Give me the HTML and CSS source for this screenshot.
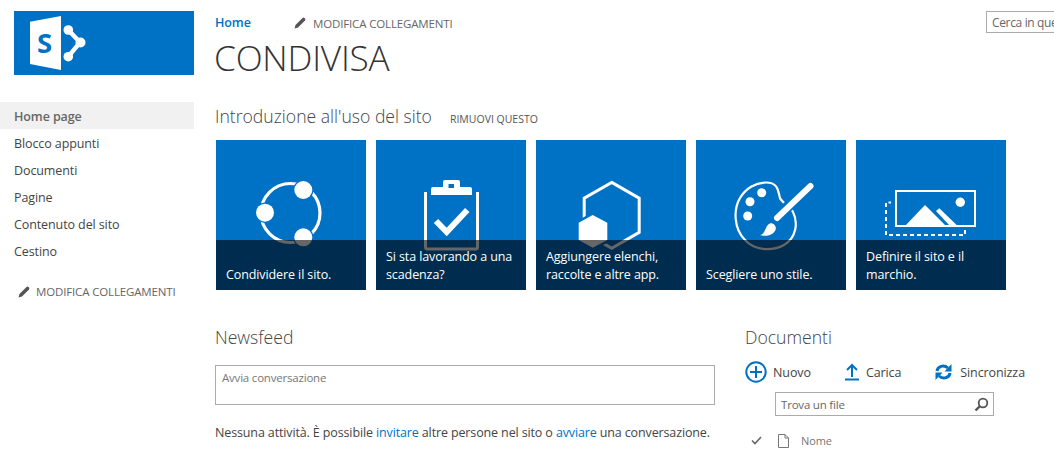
FILE: index.html
```html
<!DOCTYPE html>
<html lang="it">
<head>
<meta charset="utf-8">
<title>Condivisa</title>
<link rel="stylesheet" href="styles.css">
</head>
<body>
<div class="page">
  <aside class="side">
    <div class="logo">
      <svg width="180" height="64" viewBox="0 0 180 64">
        <polygon points="16,10.7 47,5 47,59 16,53" fill="#fff"/>
        <text x="30.500" y="42" class="logo-s">S</text>
        <path d="M54.300 19 L66 31.300 L54.300 45.700" fill="none" stroke="#fff" stroke-width="4.500"/>
        <circle cx="54.300" cy="19" r="4.800" fill="#fff"/>
        <circle cx="66.500" cy="31.500" r="5" fill="#fff"/>
        <circle cx="54.300" cy="45.700" r="4.800" fill="#fff"/>
      </svg>
    </div>
    <nav class="nav">
      <a class="nav-item is-active">Home page</a>
      <a class="nav-item">Blocco appunti</a>
      <a class="nav-item">Documenti</a>
      <a class="nav-item">Pagine</a>
      <a class="nav-item">Contenuto del sito</a>
      <a class="nav-item">Cestino</a>
    </nav>
    <div class="edit edit-side">
      <svg class="pencil" width="12" height="12" viewBox="0 0 12 12"><path d="M0.500 11.500 L1.500 8 L8.500 1 Q9.500 0.200 10.500 1 L11 1.500 Q11.800 2.500 11 3.500 L4 10.500 Z" fill="#555"/></svg>
      <span>MODIFICA COLLEGAMENTI</span>
    </div>
  </aside>
  <main class="main">
    <header class="top">
      <div class="top-left">
        <div class="crumbs">
          <a class="home">Home</a>
          <div class="edit">
            <svg class="pencil" width="12" height="12" viewBox="0 0 12 12"><path d="M0.500 11.500 L1.500 8 L8.500 1 Q9.500 0.200 10.500 1 L11 1.500 Q11.800 2.500 11 3.500 L4 10.500 Z" fill="#555"/></svg>
            <span>MODIFICA COLLEGAMENTI</span>
          </div>
        </div>
        <h1 class="title">CONDIVISA</h1>
      </div>
      <div class="site-search">Cerca in que</div>
    </header>
    <div class="intro-head">
      <h2 class="heading">Introduzione all'uso del sito</h2>
      <span class="remove">RIMUOVI QUESTO</span>
    </div>
    <div class="tiles">
      <div class="tile">
        <svg class="art" viewBox="0 0 150 150">
          <circle cx="74.500" cy="73" r="29.500" fill="none" stroke="#fff" stroke-width="3.200"/>
          <g fill="#fff" stroke="#0072c6" stroke-width="2.500" paint-order="stroke">
            <circle cx="87.300" cy="50" r="9"/><circle cx="49" cy="72.700" r="9"/><circle cx="87.300" cy="97.300" r="9"/>
          </g>
        </svg>
        <div class="cap"><span>Condividere il sito.</span></div>
      </div>
      <div class="tile">
        <svg class="art" viewBox="0 0 150 150">
          <path d="M49.500 52 V107 Q49.500 109 51.500 109 H99.500 Q101.500 109 101.500 107 V52" fill="none" stroke="#fff" stroke-width="3"/>
          <path fill="#fff" fill-rule="evenodd" d="M57 47 H67 V42 Q67 40 69 40 H82 Q84 40 84 42 V47 H94 Q96 47 96 49 V55 H55 V49 Q55 47 57 47 Z M72.500 44 V48 H78 V44 Z"/>
          <path d="M60 81 L70.700 92 L91.300 70" fill="none" stroke="#fff" stroke-width="6"/>
        </svg>
        <div class="cap"><span>Si sta lavorando a una scadenza?</span></div>
      </div>
      <div class="tile">
        <svg class="art" viewBox="0 0 150 150">
          <polygon points="75.700,42.400 103.200,58.200 103.200,92.400 75.700,108.300 48.200,92.400 48.200,58.200" fill="none" stroke="#fff" stroke-width="3"/>
          <polygon points="56.700,75 71.300,82.700 71.300,100 56.700,107.700 42.700,100 42.700,82.700" fill="#fff" stroke="#0072c6" stroke-width="5" paint-order="stroke"/>
        </svg>
        <div class="cap"><span>Aggiungere elenchi, raccolte e altre app.</span></div>
      </div>
      <div class="tile">
        <svg class="art" viewBox="0 0 150 150">
          <path d="M70 42.500 C83 42.500 82 52 84 58 C86 63 94 66 97 72 C102 82 101 97 88 105 C75 112 58 110 49 100 C38 89 37 70 44 58 C50 48 60 42.500 70 42.500 Z" fill="none" stroke="#fff" stroke-width="2.200"/>
          <g fill="#fff"><circle cx="65.700" cy="52.700" r="4.500"/><circle cx="54" cy="61.700" r="4.500"/><circle cx="51.700" cy="76" r="4.500"/></g>
          <path d="M114.500 46 L80.500 77" stroke="#0072c6" stroke-width="11" stroke-linecap="round"/>
          <path d="M114.500 46 L81 78" stroke="#fff" stroke-width="6" stroke-linecap="round"/>
          <path d="M64 95 C70 94 69 85 74 83.500 C77 82.500 81 86 79.500 90 C77.500 95 70 97 64 95 Z" fill="#fff"/>
        </svg>
        <div class="cap"><span>Scegliere uno stile.</span></div>
      </div>
      <div class="tile">
        <svg class="art" viewBox="0 0 150 150">
          <rect x="40" y="51" width="79" height="35" fill="none" stroke="#fff" stroke-width="2"/>
          <circle cx="104.300" cy="62.300" r="4.700" fill="#fff"/>
          <polygon points="49,86 69,65 90,86" fill="#fff"/>
          <polygon points="80,71 83.300,68.300 101.700,86 94,86" fill="#fff"/>
          <path d="M109 90 V95 H30 V62.500 H35" fill="none" stroke="#fff" stroke-width="2" stroke-dasharray="4 3"/>
        </svg>
        <div class="cap"><span>Definire il sito e il marchio.</span></div>
      </div>
    </div>
    <div class="lower">
      <section class="feed">
        <h2 class="heading">Newsfeed</h2>
        <div class="composer">Avvia conversazione</div>
        <p class="empty">Nessuna attività. È possibile <a>invitare</a> altre persone nel sito o <a>avviare</a> una conversazione.</p>
      </section>
      <section class="docs">
        <h2 class="heading">Documenti</h2>
        <div class="actions">
          <div class="action act-new">
            <svg width="22" height="22" viewBox="0 0 22 22"><circle cx="11" cy="11" r="9.700" fill="none" stroke="#0072c6" stroke-width="2"/><path d="M5 11 H17 M11 5 V17" stroke="#0072c6" stroke-width="2"/></svg>
            <span>Nuovo</span>
          </div>
          <div class="action act-up">
            <svg width="14" height="18" viewBox="0 0 14 18"><path d="M0 16.500 H14" stroke="#0072c6" stroke-width="2"/><path d="M7 14 V2.500 M2 7 L7 2 L12 7" fill="none" stroke="#0072c6" stroke-width="2"/></svg>
            <span>Carica</span>
          </div>
          <div class="action act-sync">
            <svg width="17" height="18" viewBox="0 0 17 18"><g fill="none" stroke="#0072c6" stroke-width="3"><path d="M2 8 C2.500 3.500 8.500 1 13 5"/><path d="M15 10 C14.500 14.500 8.500 17 4 13"/></g><g fill="#0072c6"><polygon points="16.500,1 16.500,8.500 9.500,8.500"/><polygon points="0.500,17 0.500,9.500 7.500,9.500"/></g></svg>
            <span>Sincronizza</span>
          </div>
        </div>
        <div class="find">
          <span class="find-text">Trova un file</span>
          <svg width="15" height="15" viewBox="0 0 15 15"><circle cx="9" cy="6" r="4.300" fill="none" stroke="#555" stroke-width="1.800"/><path d="M6 9 L1.500 13.500" stroke="#555" stroke-width="2.400"/></svg>
        </div>
        <div class="col-head">
          <svg width="11" height="9" viewBox="0 0 11 9"><path d="M1 4.500 L4 7.500 L10 1" fill="none" stroke="#666" stroke-width="1.600"/></svg>
          <svg width="11" height="14" viewBox="0 0 11 14"><path d="M0.500 0.500 H7 L10.500 4 V13.500 H0.500 Z M7 0.500 V4 H10.500" fill="#fff" stroke="#777"/></svg>
          <span>Nome</span>
        </div>
      </section>
    </div>
  </main>
</div>
</body>
</html>
```
FILE: styles.css
```css
html, body { margin: 0; padding: 0; background: #fff; }
body { width: 1054px; height: 450px; overflow: hidden; font-family: "Open Sans", "Noto Sans", sans-serif; color: #444; font-size: 12.5px; letter-spacing: -0.1px; }
.page { display: flex; align-items: flex-start; }
.side { width: 194px; flex: none; padding-top: 11px; }
.logo { margin-left: 14px; width: 180px; height: 64px; background: #0072c6; }
.logo svg { display: block; }
.logo-s { font: 700 27.500px "Open Sans", sans-serif; fill: #0072c6; text-anchor: middle; letter-spacing: 0; }
.nav { margin-top: 27px; display: flex; flex-direction: column; }
.nav-item { height: 27px; line-height: 29px; padding-left: 14px; color: #444; }
.is-active { background: #f1f1f1; color: #666; font-weight: 600; }
.edit { display: flex; align-items: center; gap: 7px; font-size: 11.500px; color: #666; letter-spacing: -0.15px; }
.edit-side { margin: 20px 0 0 18px; gap: 6px; }
.main { width: 839px; flex: none; margin-left: 21px; }
.top { display: flex; align-items: flex-start; }
.top-left { width: 771px; flex: none; padding-top: 15px; }
.crumbs { display: flex; align-items: center; }
.home { color: #0072c6; font-weight: 600; width: 79px; line-height: 16px; }
.title { margin: 4px 0 0 -1px; font-weight: 300; font-size: 35.200px; line-height: 44px; color: #333; letter-spacing: -0.2px; }
.site-search { margin-top: 11px; width: 68px; height: 22px; flex: none; box-sizing: border-box; border: 1px solid #ababab; border-right: 0; padding-left: 5px; font-size: 12px; line-height: 21px; white-space: nowrap; color: #666; letter-spacing: -0.35px; }
.intro-head { display: flex; align-items: baseline; gap: 18px; margin-top: 23px; }
.heading { margin: 0; font-weight: 300; font-size: 17.600px; line-height: 28px; color: #444; letter-spacing: 0; }
.remove { font-size: 10.500px; color: #555; letter-spacing: 0; }
.tiles { display: flex; gap: 10px; margin: 10px 0 0 1px; }
.tile { position: relative; width: 150px; height: 150px; background: #0072c6; overflow: hidden; color: #fff; }
.art { display: block; width: 150px; height: 150px; }
.cap { position: absolute; left: 0; right: 0; bottom: 0; height: 50px; box-sizing: border-box; padding: 0 8px 6px 10px; background: rgba(0,0,0,.6); display: flex; align-items: flex-end; line-height: 18px; }
.lower { display: flex; margin-top: 33px; }
.feed { width: 500px; flex: none; }
.composer { margin-top: 14px; height: 40px; box-sizing: border-box; border: 1px solid #ababab; padding-left: 6px; font-size: 11.500px; letter-spacing: -0.2px; line-height: 24px; color: #777; }
.empty { margin: 19px 0 0; line-height: 18px; color: #444; white-space: nowrap; letter-spacing: -0.13px; }
.empty a { color: #0072c6; }
.docs { margin-left: 30px; width: 309px; flex: none; }
.actions { display: flex; align-items: center; margin-top: 9px; height: 24px; }
.action { display: flex; align-items: center; color: #444; }
.act-new { gap: 6px; }
.act-up { margin-left: 34px; gap: 7px; }
.act-sync { margin-left: 34px; gap: 8px; }
.find { display: flex; align-items: center; justify-content: space-between; margin: 8px 0 0 30px; width: 219px; height: 24px; box-sizing: border-box; border: 1px solid #ababab; padding: 0 4px 0 5px; font-size: 11.500px; letter-spacing: -0.2px; color: #666; }
.find-text { padding-top: 1px; }
.col-head { display: flex; align-items: center; margin: 17px 0 0 6px; font-size: 11px; color: #777; }
.col-head svg:nth-child(2) { margin-left: 16px; }
.col-head span { margin-left: 12px; }
```
